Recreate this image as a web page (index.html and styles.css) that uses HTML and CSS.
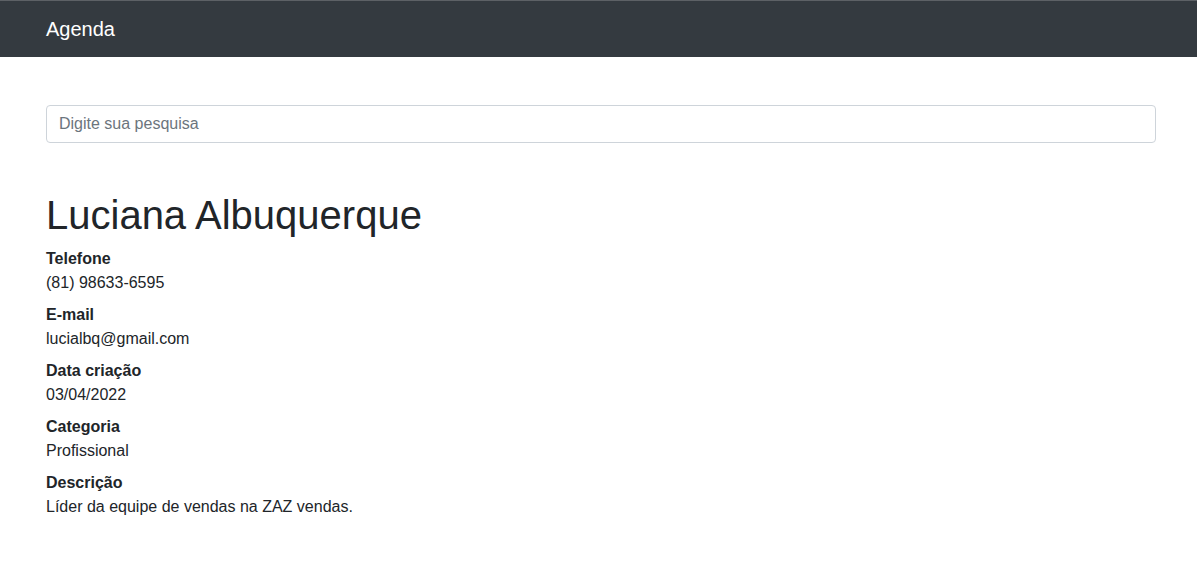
FILE: index.html
```html
<!DOCTYPE html>
<html lang="pt-BR">
<head>
<meta charset="utf-8">
<title>Agenda</title>
<link rel="stylesheet" href="styles.css">
</head>
<body>
<nav class="navbar">
  <div class="container">
    <a class="navbar-brand" href="#">Agenda</a>
  </div>
</nav>
<main class="container">
  <form class="search">
    <input class="form-control" type="search" placeholder="Digite sua pesquisa">
  </form>
  <h1 class="name">Luciana Albuquerque</h1>
  <dl class="details">
    <dt>Telefone</dt>
    <dd>(81) 98633-6595</dd>
    <dt>E-mail</dt>
    <dd>lucialbq@gmail.com</dd>
    <dt>Data criação</dt>
    <dd>03/04/2022</dd>
    <dt>Categoria</dt>
    <dd>Profissional</dd>
    <dt>Descrição</dt>
    <dd>Líder da equipe de vendas na ZAZ vendas.</dd>
  </dl>
</main>
</body>
</html>
```
FILE: styles.css
```css
* { box-sizing: border-box; }
html, body { margin: 0; padding: 0; }
body {
  font-family: "Liberation Sans", Arial, sans-serif;
  font-size: 16px;
  line-height: 1.5;
  color: #212529;
  background: #fff;
}
.container {
  padding: 0 41px 0 46px;
}
.navbar {
  background: #343a40;
  border-top: 1px solid #5d6166;
  padding: 8px 0;
}
.navbar-brand {
  display: inline-block;
  padding: 5px 0;
  font-size: 20px;
  line-height: 30px;
  color: #fff;
  text-decoration: none;
}
.search {
  margin: 48px 0 0;
}
.form-control {
  display: block;
  width: 100%;
  height: 38px;
  padding: 6px 12px;
  font-family: inherit;
  font-size: 16px;
  line-height: 1.5;
  color: #495057;
  background: #fff;
  border: 1px solid #ced4da;
  border-radius: 4px;
  outline: none;
  -webkit-appearance: none;
  appearance: none;
}
.form-control::placeholder { color: #6c757d; opacity: 1; }
.name {
  margin: 48px 0 8px;
  font-size: 40px;
  font-weight: 500;
  line-height: 1.2;
}
.details { margin: 0 0 16px; }
.details dt { font-weight: 700; }
.details dd { margin: 0 0 8px; }
```
